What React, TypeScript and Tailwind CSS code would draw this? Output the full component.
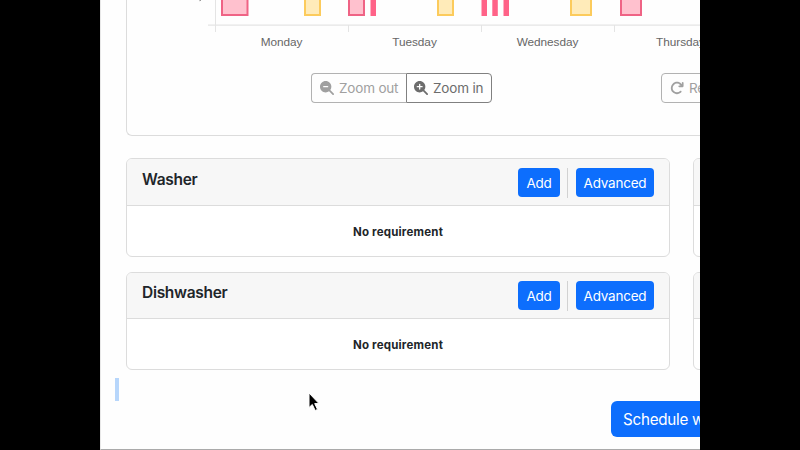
import React from "react";
import { FaMagnifyingGlassMinus, FaMagnifyingGlassPlus, FaArrowRotateRight } from "react-icons/fa6";

const sessions = [
  { x: 221, w: 27.5, kind: "pink" },
  { x: 304, w: 17, kind: "yellow" },
  { x: 348, w: 17, kind: "pink" },
  { x: 370.5, w: 5.5, kind: "solid" },
  { x: 437, w: 17, kind: "yellow" },
  { x: 481.5, w: 5.5, kind: "solid" },
  { x: 492.3, w: 5.5, kind: "solid" },
  { x: 503.5, w: 5.5, kind: "solid" },
  { x: 570, w: 22, kind: "yellow" },
  { x: 620, w: 22, kind: "pink" },
];

const palette: Record<string, { fill: string; stroke: string }> = {
  pink: { fill: "#ffc1ce", stroke: "#ef6385" },
  yellow: { fill: "#ffebb9", stroke: "#fccb5c" },
  solid: { fill: "#ff6388", stroke: "#ff6388" },
};

function Timeline() {
  return (
    <svg width="573" height="32" viewBox="127 0 573 32" className="block shrink-0">
      <g stroke="#e4e4e4" strokeWidth="1">
        <path d="M208 25.1H700" strokeWidth="1.3" />
        <path d="M215.5 0V32M348.5 25V32M481.5 25V32M614.5 25V32" />
      </g>
      {sessions.map((s) => (
        <rect
          key={s.x}
          x={s.x + 1}
          y={-10}
          width={s.w - 2}
          height={25}
          strokeWidth={2}
          fill={palette[s.kind].fill}
          stroke={palette[s.kind].stroke}
        />
      ))}
      <path d="M201 0l-1.5 0.7" stroke="#777" strokeWidth="1" />
    </svg>
  );
}

function Requirement({ name, className, headerClass }: { name?: string; className: string; headerClass: string }) {
  return (
    <section className={`flex w-[544px] shrink-0 flex-col overflow-hidden rounded-[6px] border border-[#dcdcdc] bg-white ${className}`}>
      <header className={`flex shrink-0 items-start border-b border-[#dcdcdc] bg-[#f7f7f7] px-[15px] ${headerClass}`}>
        {name && (
          <>
            <h2 className="text-[15.5px] leading-[23px] font-semibold tracking-[-0.3px] text-[#212529]">{name}</h2>
            <div className="ml-auto flex h-[29px] items-center">
              <button className="h-[29px] w-[42px] rounded-[4px] bg-[#0d6efd] text-[13.5px] leading-[28px] tracking-[-0.22px] text-white">Add</button>
              <span className="mr-[8px] ml-[7px] h-[30px] w-px bg-[#d2d2d2]" />
              <button className="h-[29px] w-[78px] rounded-[4px] bg-[#0d6efd] text-[13.5px] leading-[28px] tracking-[-0.22px] text-white">Advanced</button>
            </div>
          </>
        )}
      </header>
      {name && (
        <p className="flex flex-1 items-center justify-center pt-[3px] text-[11.5px] font-bold tracking-[0.2px] text-[#212529]">No requirement</p>
      )}
    </section>
  );
}

export default function App() {
  return (
    <div className="flex h-[450px] w-[800px] justify-center overflow-hidden bg-black font-['Inter','Liberation_Sans',sans-serif]">
      <main className="relative flex h-[450px] w-[600px] flex-col overflow-hidden border-b border-l border-b-[#aaaaaa] border-l-[#e8e8e8] bg-[#fefefe]">
        <section className="ml-[25px] flex h-[136px] w-[700px] shrink-0 flex-col rounded-bl-[6px] border-b border-l border-[#dcdcdc]">
          <Timeline />
          <div className="ml-[88px] flex h-[20px] w-[532px] shrink-0 font-['Liberation_Sans',sans-serif] text-[11.8px] leading-[20px] tracking-[-0.05px] text-[#666]">
            <span className="w-[133px] text-center">Monday</span>
            <span className="w-[133px] text-center">Tuesday</span>
            <span className="w-[133px] text-center">Wednesday</span>
            <span className="w-[133px] text-center">Thursday</span>
          </div>
          <div className="mt-[21px] ml-[184px] flex h-[30px] shrink-0 text-[13.5px] tracking-[-0.18px]">
            <button className="flex w-[95px] items-center gap-[5px] rounded-l-[4px] border border-r-0 border-[#b2b2b2] pl-[8px] whitespace-nowrap text-[#a0a0a0]">
              <FaMagnifyingGlassMinus size={14} />
              Zoom out
            </button>
            <button className="flex w-[86px] items-center gap-[5px] rounded-r-[4px] border border-[#808080] pl-[7px] whitespace-nowrap text-[#6c6c6c]">
              <FaMagnifyingGlassPlus size={14} />
              Zoom in
            </button>
            <button className="ml-[169px] flex w-[80px] items-center gap-[5px] rounded-[4px] border border-[#b2b2b2] pl-[8px] text-[#a0a0a0]">
              <FaArrowRotateRight size={14} />
              Reset
            </button>
          </div>
        </section>
        <div className="mt-[22px] ml-[25px] flex gap-[23px]">
          <Requirement name="Washer" className="h-[99px]" headerClass="h-[47px] pt-[9px]" />
          <Requirement className="h-[99px]" headerClass="h-[47px]" />
        </div>
        <div className="mt-[15px] ml-[25px] flex gap-[23px]">
          <Requirement name="Dishwasher" className="h-[98px]" headerClass="h-[46px] pt-[8px]" />
          <Requirement className="h-[98px]" headerClass="h-[46px]" />
        </div>
        <div className="mt-[8px] ml-[14px] flex">
          <span className="h-[23px] w-[4px] shrink-0 bg-[#b7d6fb]" />
          <button className="mt-[23px] ml-[492px] h-[36px] w-[200px] shrink-0 rounded-[6px] bg-[#0d6efd] pt-[2px] pl-[12px] text-left text-[15.2px] tracking-[-0.25px] whitespace-nowrap text-white">
            Schedule week
          </button>
        </div>
        <svg className="absolute top-[391px] left-[206px]" width="14" height="22" viewBox="0 0 14 22">
          <path d="M2 2V16.5L5.3 13.5L8.2 19.5L10.5 18.4L7.7 12.6H12Z" fill="#000" stroke="#fff" strokeWidth="1" />
        </svg>
      </main>
    </div>
  );
}
